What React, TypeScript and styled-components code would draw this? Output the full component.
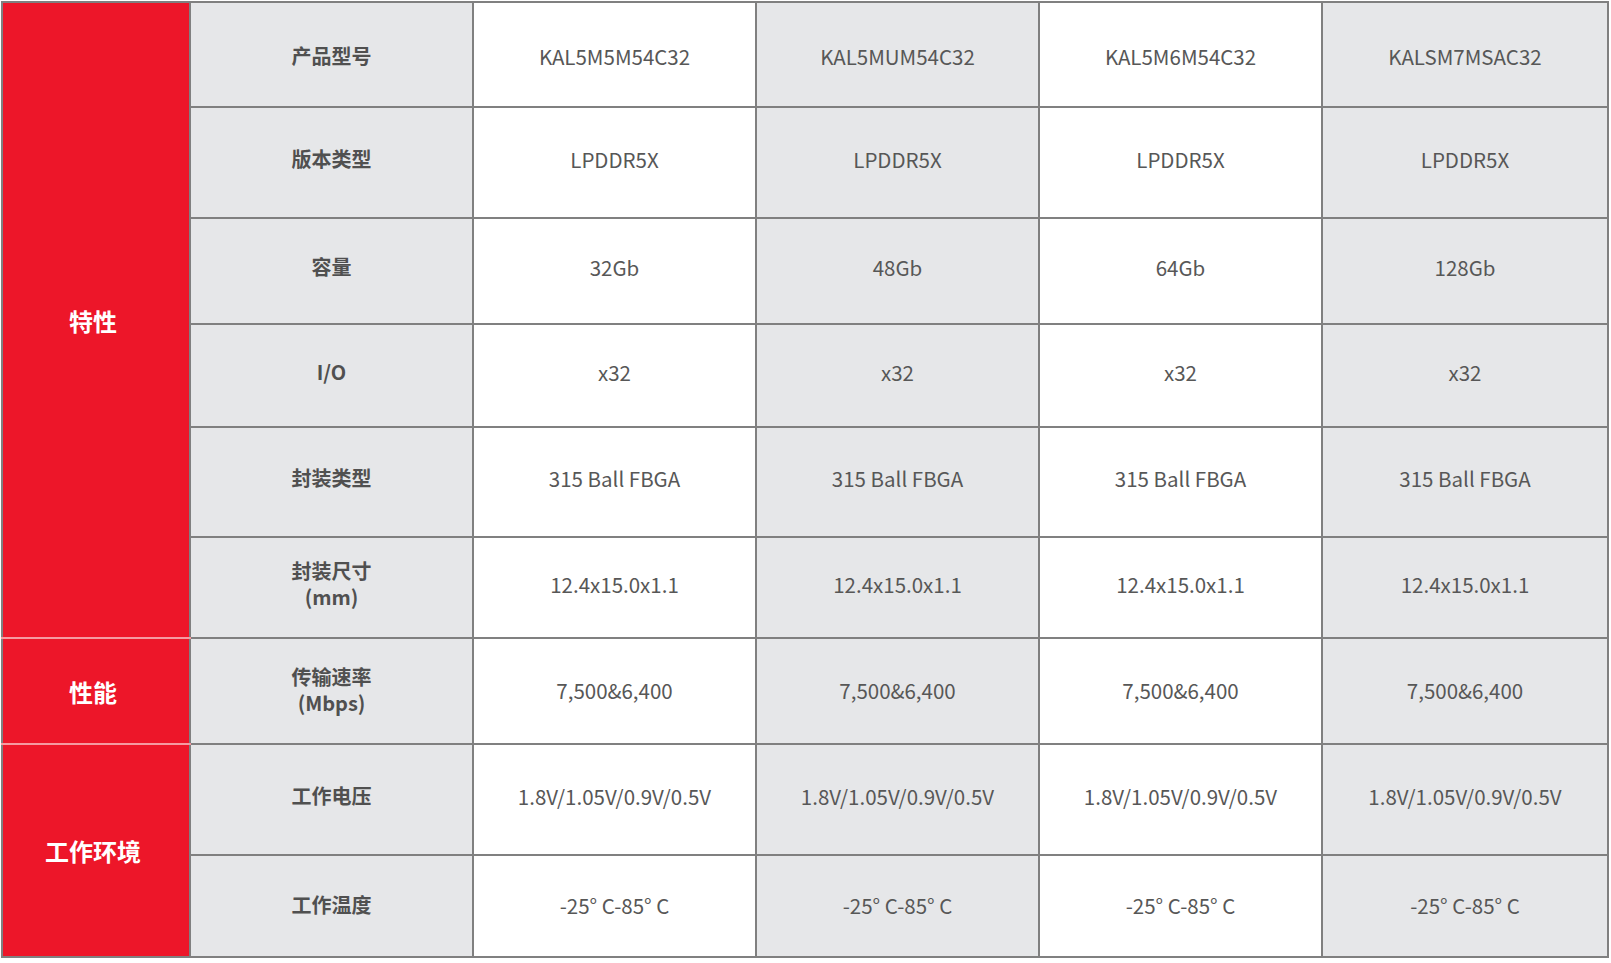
import React from "react";
import styled, { createGlobalStyle } from "styled-components";

const GlobalStyle = createGlobalStyle`
  html, body {
    margin: 0;
    padding: 0;
    background: #ffffff;
  }
  body {
    font-family: "Noto Sans CJK SC", "Noto Sans", sans-serif;
  }
`;

const LINE = "#808080";
const RED = "#ed1629";
const GREY = "#e6e7e9";

type Group = { label: string; rows: number };

const groups: Group[] = [
  { label: "特性", rows: 6 },
  { label: "性能", rows: 1 },
  { label: "工作环境", rows: 2 },
];

// lift: how far the text sits above the middle of its row
type Spec = { head: string[]; values: string[]; height: number; lift: number };

const fill = (v: string) => [v, v, v, v];

const specs: Spec[] = [
  { head: ["产品型号"], values: ["KAL5M5M54C32", "KAL5MUM54C32", "KAL5M6M54C32", "KALSM7MSAC32"], height: 105, lift: -1 },
  { head: ["版本类型"], values: fill("LPDDR5X"), height: 111, lift: 4 },
  { head: ["容量"], values: ["32Gb", "48Gb", "64Gb", "128Gb"], height: 106, lift: 4 },
  { head: ["I/O"], values: fill("x32"), height: 103, lift: 4 },
  { head: ["封装类型"], values: fill("315 Ball FBGA"), height: 110, lift: 4 },
  { head: ["封装尺寸", "(mm)"], values: fill("12.4x15.0x1.1"), height: 101, lift: 4 },
  { head: ["传输速率", "(Mbps)"], values: fill("7,500&6,400"), height: 106, lift: 1 },
  { head: ["工作电压"], values: fill("1.8V/1.05V/0.9V/0.5V"), height: 111, lift: 4 },
  { head: ["工作温度"], values: fill("-25° C-85° C"), height: 102, lift: 1 },
];

const widths = [188, 283, 283, 283, 283, 286];

const Page = styled.div`
  padding: 1px 0 0 1px;
`;

const Table = styled.table`
  width: 1606px;
  border-collapse: collapse;
  table-layout: fixed;
  border: 2px solid ${LINE};
`;

const Col = styled.col<{ $w: number }>`
  width: ${(p) => p.$w}px;
`;

const Row = styled.tr<{ $h: number; $lift: number }>`
  height: ${(p) => p.$h}px;

  th,
  td {
    padding-top: ${(p) => (p.$lift < 0 ? -p.$lift * 2 : 0)}px;
    padding-bottom: ${(p) => (p.$lift > 0 ? p.$lift * 2 : 0)}px;
  }
`;

const GroupCell = styled.td<{ $first: boolean; $last: boolean }>`
  background: ${RED};
  color: #ffffff;
  font-size: 24px;
  font-weight: 700;
  text-align: center;
  vertical-align: middle;
  border: 2px solid ${LINE};
  border-top-color: ${(p) => (p.$first ? LINE : "#f59aa1")};
  border-bottom-color: ${(p) => (p.$last ? LINE : "#f59aa1")};
  && {
    padding: 0 6px 0 0;
  }
`;

const HeadCell = styled.th`
  background: ${GREY};
  color: #505050;
  font-size: 20px;
  font-weight: 700;
  line-height: 26px;
  text-align: center;
  vertical-align: middle;
  border: 2px solid ${LINE};
  padding-left: 0;
  padding-right: 0;
`;

const ValueCell = styled.td<{ $shaded: boolean }>`
  background: ${(p) => (p.$shaded ? GREY : "#ffffff")};
  color: #575757;
  font-size: 20.5px;
  font-weight: 400;
  text-align: center;
  vertical-align: middle;
  border: 2px solid ${LINE};
  padding-left: 0;
  padding-right: 0;
  white-space: nowrap;
`;

const HeadLine = styled.div`
  display: block;
`;

export default function App() {
  let groupIndex = 0;
  let rowsLeft = 0;
  return (
    <Page>
      <GlobalStyle />
      <Table>
        <colgroup>
          {widths.map((w, i) => (
            <Col key={i} $w={w} />
          ))}
        </colgroup>
        <tbody>
          {specs.map((spec, i) => {
            let group: React.ReactNode = null;
            if (rowsLeft === 0) {
              const g = groups[groupIndex];
              group = (
                <GroupCell
                  rowSpan={g.rows}
                  $first={groupIndex === 0}
                  $last={groupIndex === groups.length - 1}
                >
                  {g.label}
                </GroupCell>
              );
              rowsLeft = g.rows;
              groupIndex += 1;
            }
            rowsLeft -= 1;
            return (
              <Row key={i} $h={spec.height} $lift={spec.lift}>
                {group}
                <HeadCell>
                  {spec.head.map((line) => (
                    <HeadLine key={line}>{line}</HeadLine>
                  ))}
                </HeadCell>
                {spec.values.map((v, j) => (
                  <ValueCell key={j} $shaded={j % 2 === 1}>
                    {v}
                  </ValueCell>
                ))}
              </Row>
            );
          })}
        </tbody>
      </Table>
    </Page>
  );
}
